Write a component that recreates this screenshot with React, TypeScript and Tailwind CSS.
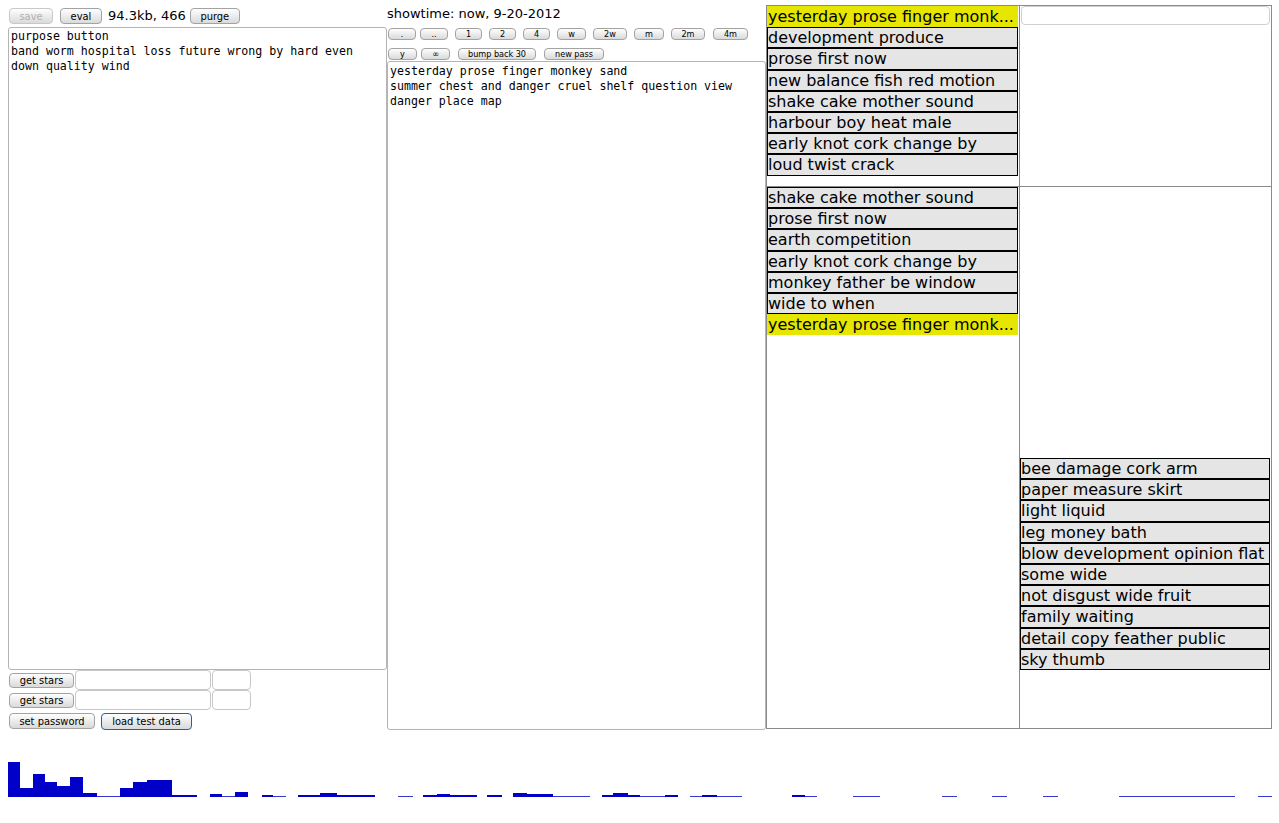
import React from 'react';

const sans = "font-['DejaVu_Sans',sans-serif]";
const btn =
    "flex items-center justify-center p-0 leading-none text-black border border-[#a3a3a3] rounded-[4px] bg-linear-to-b from-[#fefefe] to-[#dadada] font-['DejaVu_Sans_Condensed','DejaVu_Sans',sans-serif]";

const topList = [
    'development produce',
    'prose first now',
    'new balance fish red motion',
    'shake cake mother sound',
    'harbour boy heat male',
    'early knot cork change by',
    'loud twist crack',
];

const midList = [
    'shake cake mother sound',
    'prose first now',
    'earth competition',
    'early knot cork change by',
    'monkey father be window',
    'wide to when',
];

const sideList = [
    'bee damage cork arm',
    'paper measure skirt',
    'light liquid',
    'leg money bath',
    'blow development opinion flat',
    'some wide',
    'not disgust wide fruit',
    'family waiting',
    'detail copy feather public',
    'sky thumb',
];

// time filter buttons: label, width, left margin
const rangeRow: [string, string, string][] = [
    ['.', 'w-[28px]', 'ml-[1px]'],
    ['..', 'w-[28px]', 'ml-[4px]'],
    ['1', 'w-[27px]', 'ml-[7px]'],
    ['2', 'w-[27px]', 'ml-[7px]'],
    ['4', 'w-[27px]', 'ml-[7px]'],
    ['w', 'w-[29px]', 'ml-[7px]'],
    ['2w', 'w-[34px]', 'ml-[7px]'],
    ['m', 'w-[30px]', 'ml-[7px]'],
    ['2m', 'w-[34px]', 'ml-[7px]'],
    ['4m', 'w-[35px]', 'ml-[8px]'],
];

const actionRow: [string, string, string][] = [
    ['y', 'w-[29px]', 'ml-[1px]'],
    ['∞', 'w-[29px]', 'ml-[4px]'],
    ['bump back 30', 'w-[78px]', 'ml-[8px]'],
    ['new pass', 'w-[60px]', 'ml-[8px]'],
];

// histogram segments: [x start, x end, height] in page pixels
const bars: [number, number, number][] = [
    [8, 20, 35], [20, 33, 9], [33, 45, 23], [45, 57, 15], [57, 70, 11], [70, 83, 20],
    [83, 97, 4], [97, 120, 1], [120, 133, 9], [133, 147, 15], [147, 172, 17], [172, 197, 2],
    [210, 222, 3], [222, 235, 1], [235, 248, 5], [262, 273, 2], [273, 286, 1], [298, 320, 2],
    [320, 337, 4], [337, 375, 2], [398, 413, 1], [423, 437, 2], [437, 450, 3], [450, 477, 2],
    [487, 502, 2], [513, 527, 4], [527, 553, 3], [553, 590, 1], [602, 613, 2], [613, 628, 4],
    [628, 640, 2], [640, 665, 1], [665, 678, 2], [690, 702, 1], [702, 717, 2], [717, 742, 1],
    [792, 805, 2], [805, 817, 1], [853, 880, 1], [942, 957, 1], [992, 1007, 1], [1043, 1058, 1],
    [1119, 1235, 1], [1258, 1272, 1],
];

const Item: React.FC<{ text: string; hot?: boolean; wide?: boolean }> = ({ text, hot, wide }) => (
    <div
        className={`${wide ? 'w-[250px]' : 'w-[251px]'} leading-[19.2px] text-[16px] whitespace-nowrap overflow-hidden border ${
            hot ? 'bg-[#e6e600] border-[#e6e600]' : 'bg-[#e5e5e5] border-black'
        }`}
    >
        {text}
    </div>
);

const Histogram: React.FC = () => (
    <svg width={1264} height={40} viewBox="0 0 1264 40" className="block">
        {bars.map(([x0, x1, h], i) => (
            <rect key={i} x={x0 - 8} y={40 - h} width={x1 - x0} height={h} fill={h > 1 ? '#0000c8' : '#3636d0'} />
        ))}
    </svg>
);

export default function App() {
    return (
        <div className={`w-[1279px] h-[823px] bg-white text-black overflow-hidden ${sans}`}>
            <div className="flex items-start pt-[5px] pl-[8px]">
                {/* editor column */}
                <div className="w-[379px] flex flex-col pt-[3px]">
                    <div className="flex items-center h-[16px]">
                        <button disabled className={`${btn} ml-[1px] w-[44px] h-[16px] text-[11px] !text-[#b0b0b0] border-[#c8c8c8]`}>save</button>
                        <button className={`${btn} ml-[7px] w-[42px] h-[16px] text-[11px]`}>eval</button>
                        <span className="ml-[6px] text-[13px] leading-[16px]">94.3kb, 466</span>
                        <button className={`${btn} ml-[4px] w-[50px] h-[16px] text-[11px]`}>purge</button>
                    </div>
                    <textarea
                        className="mt-[3px] w-[379px] h-[643px] resize-none border border-[#b4b4b4] rounded-[3px] pt-[1px] pl-[2px] text-[11.6px] leading-[15px] font-['DejaVu_Sans_Mono',monospace] outline-none"
                        defaultValue={'purpose button\nband worm hospital loss future wrong by hard even\ndown quality wind'}
                    />
                    <div className="flex items-center h-[20px]">
                        <button className={`${btn} ml-[1px] w-[65px] h-[15px] text-[11px]`}>get stars</button>
                        <input className="block ml-[1px] w-[136px] h-[20px] border border-[#c8c8c8] rounded-[4px] outline-none" />
                        <input className="block ml-[1px] w-[39px] h-[20px] border border-[#c8c8c8] rounded-[4px] outline-none" />
                    </div>
                    <div className="flex items-center h-[20px]">
                        <button className={`${btn} ml-[1px] w-[65px] h-[15px] text-[11px]`}>get stars</button>
                        <input className="block ml-[1px] w-[136px] h-[20px] border border-[#c8c8c8] rounded-[4px] outline-none" />
                        <input className="block ml-[1px] w-[39px] h-[20px] border border-[#c8c8c8] rounded-[4px] outline-none" />
                    </div>
                    <div className="flex items-center h-[20px] mt-[1px]">
                        <button className={`${btn} ml-[1px] w-[86px] h-[16px] text-[11px]`}>set password</button>
                        <button className={`${btn} ml-[6px] w-[91px] h-[17px] text-[11px] !border-[#2d5f9e] border-[1.5px]`}>load test data</button>
                    </div>
                </div>

                {/* entry column */}
                <div className="w-[379px] flex flex-col">
                    <div className="mt-[1px] h-[16px] leading-[16px] text-[13px] whitespace-nowrap">showtime: now, 9-20-2012</div>
                    <div className="flex mt-[6px] h-[12px]">
                        {rangeRow.map(([label, w, ml]) => (
                            <button key={label} className={`${btn} ${w} ${ml} h-[12px] text-[9px]`}>{label}</button>
                        ))}
                    </div>
                    <div className="flex mt-[8px] h-[12px]">
                        {actionRow.map(([label, w, ml]) => (
                            <button key={label} className={`${btn} ${w} ${ml} h-[12px] text-[9px]`}>{label}</button>
                        ))}
                    </div>
                    <textarea
                        className="mt-[1px] w-[379px] h-[669px] resize-none border border-[#b4b4b4] rounded-[3px] pt-[2px] pl-[2px] text-[11.6px] leading-[15px] font-['DejaVu_Sans_Mono',monospace] outline-none"
                        defaultValue={'yesterday prose finger monkey sand\nsummer chest and danger cruel shelf question view\ndanger place map'}
                    />
                </div>

                {/* lists table */}
                <div className="w-[506px] h-[724px] border border-[#8a8a8a] flex flex-col">
                    <div className="flex h-[181px] border-b border-[#8a8a8a]">
                        <div className="w-[253px] border-r border-[#8a8a8a] flex flex-col">
                            <Item text="yesterday prose finger monk..." hot />
                            {topList.map((t) => (
                                <Item key={t} text={t} />
                            ))}
                        </div>
                        <div className="flex-1 pl-[1px]">
                            <input className="block w-[249px] h-[19px] border border-[#d0d0d0] rounded-[4px] outline-none" />
                        </div>
                    </div>
                    <div className="flex flex-1">
                        <div className="w-[253px] border-r border-[#8a8a8a] flex flex-col">
                            {midList.map((t) => (
                                <Item key={t} text={t} />
                            ))}
                            <Item text="yesterday prose finger monk..." hot />
                        </div>
                        <div className="flex-1 flex flex-col pt-[271px]">
                            {sideList.map((t) => (
                                <Item key={t} text={t} wide />
                            ))}
                        </div>
                    </div>
                </div>
            </div>

            <div className="mt-[26px] ml-[8px]">
                <Histogram />
            </div>
        </div>
    );
}
